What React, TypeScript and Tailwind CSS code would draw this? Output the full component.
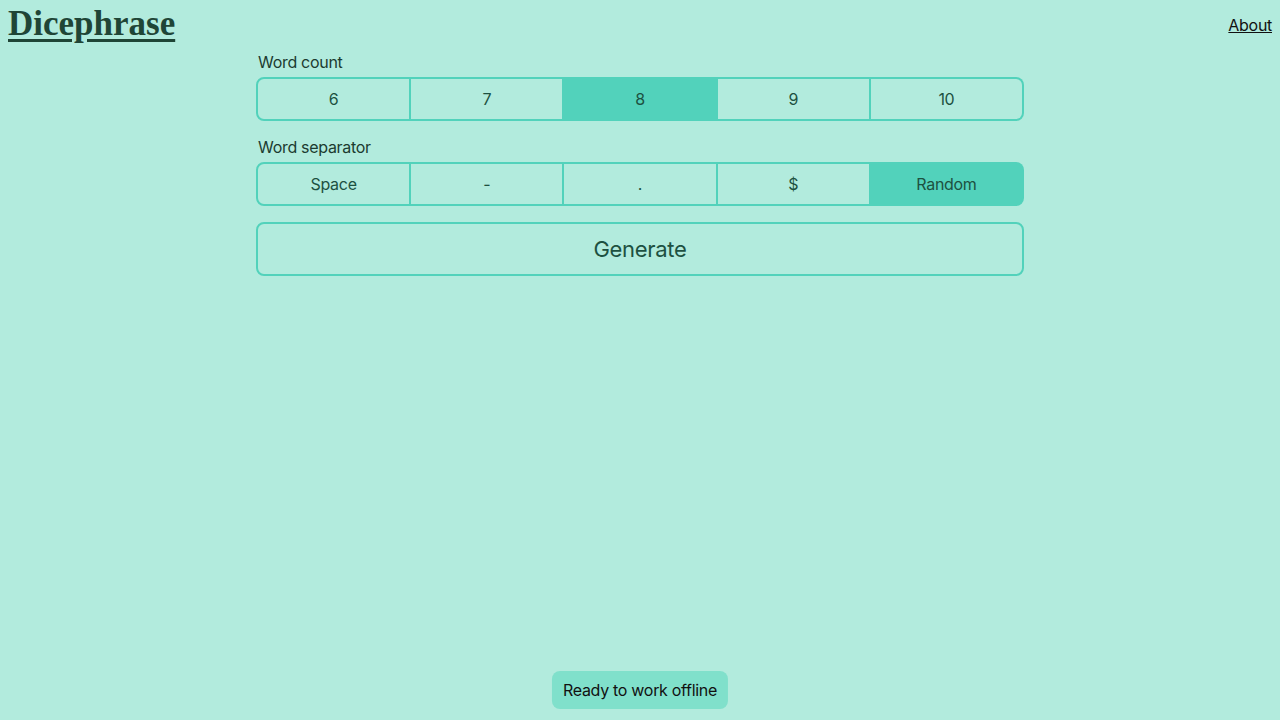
import { useState } from "react";

const COUNTS = ["6", "7", "8", "9", "10"];
const SEPARATORS = ["Space", "-", ".", "$", "Random"];

function Segmented({
  options,
  value,
  onChange,
}: {
  options: string[];
  value: string;
  onChange: (v: string) => void;
}) {
  return (
    <div className="flex">
      {options.map((o, i) => {
        const active = o === value;
        return (
          <button
            key={o}
            onClick={() => onChange(o)}
            className={
              "flex-1 h-[44px] border-2 border-[#52d2bb] text-[16px] text-[#1d5141] " +
              (i > 0 ? "border-l-0 " : "") +
              (i === 0 ? "rounded-l-lg " : "") +
              (i === options.length - 1 ? "rounded-r-lg " : "") +
              (active ? "bg-[#52d2bb]" : "bg-transparent")
            }
          >
            {o}
          </button>
        );
      })}
    </div>
  );
}

export default function App() {
  const [count, setCount] = useState("8");
  const [sep, setSep] = useState("Random");

  return (
    <div
      className="min-h-screen bg-[#b2ebdd] text-[#1c3b30] tracking-[-0.3px]"
      style={{ fontFamily: "Inter, 'Noto Sans', sans-serif" }}
    >
      <header className="flex items-center justify-between h-12 px-2">
        <a
          href="#"
          className="text-[35px] leading-[48px] font-bold underline text-[#1f4536] decoration-[3px] underline-offset-[4px] tracking-normal"
          style={{ fontFamily: "'Liberation Serif', 'Times New Roman', serif" }}
        >
          Dicephrase
        </a>
        <a href="#" className="text-[16px] underline text-[#111] pt-0.5">
          About
        </a>
      </header>

      <main className="w-[768px] mx-auto">
        <div className="text-[16px] leading-6 mt-0.5 mb-[3px] px-0.5">Word count</div>
        <Segmented options={COUNTS} value={count} onChange={setCount} />

        <div className="text-[16px] leading-6 mt-[14px] mb-[3px] px-0.5">Word separator</div>
        <Segmented options={SEPARATORS} value={sep} onChange={setSep} />

        <button className="mt-4 w-full h-[54px] border-2 border-[#52d2bb] rounded-lg text-[22px] text-[#1d5141]">
          Generate
        </button>
      </main>

      <div className="fixed bottom-[11px] left-1/2 -translate-x-1/2 bg-[#80e0cb] rounded-lg px-[11px] h-[38px] flex items-center text-[16px] text-[#111] whitespace-nowrap">
        Ready to work offline
      </div>
    </div>
  );
}
